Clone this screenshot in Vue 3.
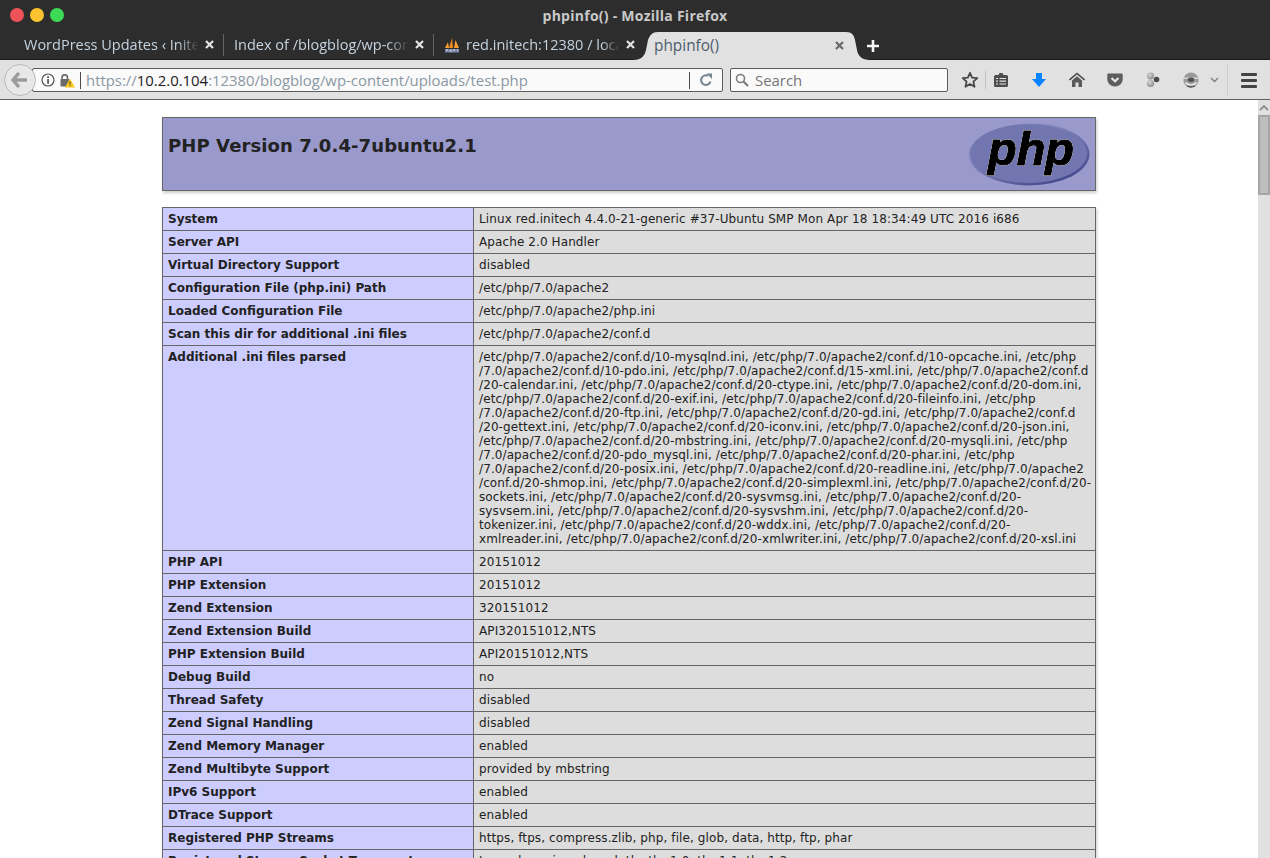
<template>
  <div class="window">
    <div class="titlebar">
      <div class="lights">
        <span class="light red"></span>
        <span class="light yellow"></span>
        <span class="light green"></span>
      </div>
      <div class="title">phpinfo() - Mozilla Firefox</div>
    </div>

    <div class="tabbar">
      <div v-for="tab in tabs" :key="tab.title" class="tab">
        <svg v-if="tab.pma" class="favicon" width="16" height="16" viewBox="0 0 16 16">
          <path d="M1 11 L4 5 L5 11Z" fill="#f7a030" />
          <path d="M5 11 L8 1 L9 11Z" fill="#f08a1d" />
          <path d="M10 11 L11.5 3 L15 11Z" fill="#f7a030" />
          <rect x="1" y="12" width="14" height="3.5" fill="#7c88a8" />
          <path d="M2 13h2M6 13h1v2M9 13h2M13 13h1" stroke="#d8dde8" stroke-width="1" fill="none" />
        </svg>
        <span class="tab-text">{{ tab.title }}</span>
        <svg class="close" width="9" height="9" viewBox="0 0 9 9">
          <path d="M1 1 L8 8 M8 1 L1 8" stroke="#e4e4e4" stroke-width="2.2" />
        </svg>
      </div>
      <div class="tab active">
        <svg class="tab-shape" width="237" height="28" viewBox="0 0 237 28">
          <path d="M0 28 C9 28 12 23 13 18 L15 8 C17 3 19 0 25 0 L213 0 C219 0 221 3 222 8 L224 18 C225 24 229 28 237 28Z" fill="#e1e1e1" />
        </svg>
        <span class="tab-text active-text">phpinfo()</span>
        <svg class="close" width="9" height="9" viewBox="0 0 9 9">
          <path d="M1 1 L8 8 M8 1 L1 8" stroke="#66686a" stroke-width="2.2" />
        </svg>
      </div>
      <svg class="plus" width="14" height="14" viewBox="0 0 14 14">
        <path d="M7 1 V13 M1 7 H13" stroke="#f4f4f4" stroke-width="2.6" />
      </svg>
    </div>

    <div class="navbar">
      <div class="back">
        <svg width="18" height="16" viewBox="0 0 18 16">
          <path d="M8 1 L2 8 L8 15 M2.5 8 H16" stroke="#9b9b9b" stroke-width="3.4" fill="none" />
        </svg>
      </div>
      <div class="urlbar">
        <svg class="info" width="14" height="14" viewBox="0 0 14 14">
          <circle cx="7" cy="7" r="6" fill="none" stroke="#555" stroke-width="1.2" />
          <rect x="6.2" y="6" width="1.7" height="4.8" fill="#555" />
          <rect x="6.2" y="3.2" width="1.7" height="1.7" fill="#555" />
        </svg>
        <svg class="lock" width="16" height="15" viewBox="0 0 16 15">
          <path d="M3 6 V4.5 C3 1 8.5 1 8.5 4.5 V6" fill="none" stroke="#6a6a6a" stroke-width="1.6" />
          <rect x="1.5" y="6" width="9" height="7.5" rx="1" fill="#6a6a6a" />
          <path d="M11 5.5 L16 14.5 H6Z" fill="#fdc91c" />
          <rect x="10.5" y="8.5" width="1" height="3" fill="#333" />
          <rect x="10.5" y="12.2" width="1" height="1" fill="#333" />
        </svg>
        <span class="url-sep"></span>
        <span class="url"><span class="dim">https://</span><span class="host">10.2.0.104</span><span class="dim">:12380/blogblog/wp-content/uploads/test.php</span></span>
        <span class="url-sep second"></span>
        <svg class="reload" width="14" height="14" viewBox="0 0 14 14">
          <path d="M11.5 8.5 A4.8 4.8 0 1 1 9 2.8" fill="none" stroke="#76848f" stroke-width="2" />
          <path d="M7.5 0.5 H13 V6 Z" fill="#76848f" />
        </svg>
      </div>
      <div class="searchbar">
        <svg width="14" height="14" viewBox="0 0 14 14">
          <circle cx="5.5" cy="5.5" r="4" fill="none" stroke="#7d7d7d" stroke-width="1.6" />
          <path d="M8.5 8.5 L13 13" stroke="#7d7d7d" stroke-width="2.2" />
        </svg>
        <span>Search</span>
      </div>

      <div class="tools">
        <div class="tool">
          <svg width="18" height="18" viewBox="0 0 18 18">
            <path d="M9 1.8 L11.1 6.6 L16.3 7.1 L12.4 10.6 L13.5 15.8 L9 13.1 L4.5 15.8 L5.6 10.6 L1.7 7.1 L6.9 6.6Z" fill="none" stroke="#484848" stroke-width="1.8" stroke-linejoin="round" />
          </svg>
        </div>
        <span class="tool-sep"></span>
        <div class="tool">
          <svg width="16" height="16" viewBox="0 0 16 16">
            <path d="M2.5 3 H5.5 L6.5 1 H9.5 L10.5 3 H13.5 Q15 3 15 4.5 V13.5 Q15 15 13.5 15 H2.5 Q1 15 1 13.5 V4.5 Q1 3 2.5 3Z" fill="#4d4d4d" />
            <path d="M3 6.5h2M6.5 6.5h6.5M3 9.2h2M6.5 9.2h6.5M3 12h2M6.5 12h6.5" stroke="#e1e1e1" stroke-width="1.2" />
          </svg>
        </div>
        <div class="tool gap">
          <svg width="16" height="16" viewBox="0 0 16 16">
            <path d="M5 1 H11 V7 H15 L8 15 L1 7 H5Z" fill="#0a84ff" />
          </svg>
        </div>
        <div class="tool gap">
          <svg width="16" height="16" viewBox="0 0 16 16">
            <path d="M0.5 8 L8 1.5 L15.5 8" fill="none" stroke="#4a4a4a" stroke-width="1.6" />
            <path d="M3 8.5 L8 4.2 L13 8.5 V15 H9.5 V10.5 H6.5 V15 H3Z" fill="#5a5a5a" />
          </svg>
        </div>
        <div class="tool gap">
          <svg width="16" height="16" viewBox="0 0 16 16">
            <path d="M1.5 1.5 H14.5 Q15.7 1.5 15.7 2.8 V7 C15.7 11.5 12 14.5 8 14.5 C4 14.5 0.3 11.5 0.3 7 V2.8 Q0.3 1.5 1.5 1.5Z" fill="#5d5d5d" />
            <path d="M4.5 6 L8 9.3 L11.5 6" fill="none" stroke="#e8e8e8" stroke-width="2.2" />
          </svg>
        </div>
        <div class="tool gap">
          <svg width="16" height="16" viewBox="0 0 16 16">
            <defs>
              <radialGradient id="ball" cx="0.4" cy="0.35" r="0.7">
                <stop offset="0" stop-color="#d8d8d8" />
                <stop offset="1" stop-color="#858585" />
              </radialGradient>
            </defs>
            <circle cx="5.5" cy="4" r="3.4" fill="url(#ball)" />
            <circle cx="5.5" cy="11.5" r="3.6" fill="url(#ball)" />
            <circle cx="11.5" cy="7.5" r="2.8" fill="#4b4b4b" />
          </svg>
        </div>
        <div class="tool gap">
          <svg width="16" height="16" viewBox="0 0 16 16">
            <circle cx="8" cy="8" r="7.6" fill="#9a9a9a" />
            <path d="M1 6.2 H15" stroke="#e2e2e2" stroke-width="1.2" />
            <ellipse cx="8" cy="7.8" rx="3.2" ry="2.2" fill="#4f4f4f" />
            <path d="M2.5 10.5 C5 13.6 11 13.6 13.5 10.5" fill="none" stroke="#f2f2f2" stroke-width="1.4" />
            <path d="M4 14 C6.5 15.3 9.5 15.3 12 14" fill="none" stroke="#4f4f4f" stroke-width="1.2" />
          </svg>
        </div>
        <div class="chevron">
          <svg width="9" height="6" viewBox="0 0 9 6">
            <path d="M1 1 L4.5 4.5 L8 1" fill="none" stroke="#7b7b7b" stroke-width="1.3" />
          </svg>
        </div>
        <span class="menu-sep"></span>
        <div class="hamburger">
          <span></span><span></span><span></span>
        </div>
      </div>
    </div>

    <div class="viewport">
      <div class="page">
        <table class="header-table">
          <tbody>
            <tr>
              <td class="h">
                <svg class="php-logo" width="122" height="64" viewBox="0 0 122 64">
                  <defs>
                    <linearGradient id="rim" x1="0.1" y1="0" x2="0.85" y2="1">
                      <stop offset="0" stop-color="#a6a9d4" />
                      <stop offset="0.5" stop-color="#7478b1" />
                      <stop offset="1" stop-color="#3d4288" />
                    </linearGradient>
                  </defs>
                  <ellipse cx="61" cy="32" rx="60.5" ry="31.5" fill="url(#rim)" />
                  <ellipse cx="60.5" cy="31.5" rx="58.5" ry="29.5" fill="#7276b0" />
                  <text class="php-word" x="20" y="43" textLength="86" lengthAdjust="spacingAndGlyphs">php</text>
                </svg>
                <h1>PHP Version 7.0.4-7ubuntu2.1</h1>
              </td>
            </tr>
          </tbody>
        </table>

        <table class="info-table">
          <colgroup>
            <col class="col-key" />
            <col />
          </colgroup>
          <tbody>
            <tr v-for="row in rows" :key="row.key">
              <td class="e">{{ row.key }}</td>
              <td class="v">
                <div v-for="line in row.lines" :key="line">{{ line }}</div>
              </td>
            </tr>
          </tbody>
        </table>
      </div>
      <div class="scrollbar">
        <div class="scroll-up">
          <svg width="10" height="6" viewBox="0 0 10 6">
            <path d="M1 5 L5 1 L9 5" fill="none" stroke="#8c8c8c" stroke-width="1.8" />
          </svg>
        </div>
        <div class="scroll-thumb"></div>
      </div>
    </div>
  </div>
</template>

<script setup>
const tabs = [
  { title: 'WordPress Updates ‹ Initech' },
  { title: 'Index of /blogblog/wp-content/uploads' },
  { title: 'red.initech:12380 / localhost', pma: true }
]

const conf = '/etc/php/7.0/apache2/conf.d'

const rows = [
  ['System', 'Linux red.initech 4.4.0-21-generic #37-Ubuntu SMP Mon Apr 18 18:34:49 UTC 2016 i686'],
  ['Server API', 'Apache 2.0 Handler'],
  ['Virtual Directory Support', 'disabled'],
  ['Configuration File (php.ini) Path', '/etc/php/7.0/apache2'],
  ['Loaded Configuration File', '/etc/php/7.0/apache2/php.ini'],
  ['Scan this dir for additional .ini files', conf],
  ['Additional .ini files parsed', [
    `${conf}/10-mysqlnd.ini, ${conf}/10-opcache.ini, /etc/php`,
    '/7.0/apache2/conf.d/10-pdo.ini, /etc/php/7.0/apache2/conf.d/15-xml.ini, /etc/php/7.0/apache2/conf.d',
    `/20-calendar.ini, ${conf}/20-ctype.ini, ${conf}/20-dom.ini,`,
    `${conf}/20-exif.ini, ${conf}/20-fileinfo.ini, /etc/php`,
    `/7.0/apache2/conf.d/20-ftp.ini, ${conf}/20-gd.ini, ${conf}`,
    `/20-gettext.ini, ${conf}/20-iconv.ini, ${conf}/20-json.ini,`,
    `${conf}/20-mbstring.ini, ${conf}/20-mysqli.ini, /etc/php`,
    `/7.0/apache2/conf.d/20-pdo_mysql.ini, ${conf}/20-phar.ini, /etc/php`,
    `/7.0/apache2/conf.d/20-posix.ini, ${conf}/20-readline.ini, /etc/php/7.0/apache2`,
    `/conf.d/20-shmop.ini, ${conf}/20-simplexml.ini, ${conf}/20-`,
    `sockets.ini, ${conf}/20-sysvmsg.ini, ${conf}/20-`,
    `sysvsem.ini, ${conf}/20-sysvshm.ini, ${conf}/20-`,
    `tokenizer.ini, ${conf}/20-wddx.ini, ${conf}/20-`,
    `xmlreader.ini, ${conf}/20-xmlwriter.ini, ${conf}/20-xsl.ini`
  ]],
  ['PHP API', '20151012'],
  ['PHP Extension', '20151012'],
  ['Zend Extension', '320151012'],
  ['Zend Extension Build', 'API320151012,NTS'],
  ['PHP Extension Build', 'API20151012,NTS'],
  ['Debug Build', 'no'],
  ['Thread Safety', 'disabled'],
  ['Zend Signal Handling', 'disabled'],
  ['Zend Memory Manager', 'enabled'],
  ['Zend Multibyte Support', 'provided by mbstring'],
  ['IPv6 Support', 'enabled'],
  ['DTrace Support', 'enabled'],
  ['Registered PHP Streams', 'https, ftps, compress.zlib, php, file, glob, data, http, ftp, phar'],
  ['Registered Stream Socket Transports', 'tcp, udp, unix, udg, ssl, tls, tlsv1.0, tlsv1.1, tlsv1.2']
].map(([key, value]) => ({ key, lines: Array.isArray(value) ? value : [value] }))
</script>

<style>
html,
body {
  margin: 0;
  overflow: hidden;
}
</style>

<style scoped>
.window {
  display: flex;
  flex-direction: column;
  height: 858px;
  overflow: hidden;
  font-family: "Open Sans", "Noto Sans", sans-serif;
}

.titlebar {
  display: flex;
  align-items: center;
  justify-content: center;
  position: relative;
  height: 30px;
  background: #2d2d2d;
}

.lights {
  position: absolute;
  left: 10px;
  top: 8px;
  display: flex;
  gap: 6px;
}

.light {
  width: 14px;
  height: 14px;
  border-radius: 50%;
}

.red { background: #f0525a; }
.yellow { background: #fdc22f; }
.green { background: #3ddb55; }

.title {
  color: #c9c9c9;
  font-size: 14px;
  font-weight: 700;
  letter-spacing: 0.25px;
}

.tabbar {
  display: flex;
  align-items: stretch;
  height: 30px;
  padding: 2px 0 0 14px;
  box-sizing: border-box;
  background: #2d2d2d;
  box-shadow: inset 0 -1px #1c1c1c;
}

.tab {
  display: flex;
  align-items: center;
  width: 210px;
  padding: 0 9px 1px 10px;
  box-sizing: border-box;
  border-right: 1px solid #63676a;
  margin-bottom: 4px;
  margin-top: 2px;
  height: 22px;
  align-self: center;
}

.tab-text {
  flex: 1;
  min-width: 0;
  overflow: hidden;
  white-space: nowrap;
  color: #c5d3df;
  font-size: 14.5px;
  -webkit-mask-image: linear-gradient(to right, #000 88%, transparent 100%);
  mask-image: linear-gradient(to right, #000 88%, transparent 100%);
}

.favicon {
  margin-right: 6px;
  flex-shrink: 0;
}

.close {
  margin-left: 6px;
  flex-shrink: 0;
}

.tab:nth-child(3) {
  border-right: none;
}

.tab.active {
  position: relative;
  width: 237px;
  height: 28px;
  margin: 0 0 0 -11px;
  padding: 0 26px 1px 21px;
  border: none;
  align-self: flex-end;
}

.tab-shape {
  position: absolute;
  left: 0;
  top: 0;
}

.active-text {
  position: relative;
  color: #4e5d6c;
  font-size: 15.4px;
  -webkit-mask-image: none;
  mask-image: none;
}

.tab.active .close {
  position: relative;
}

.plus {
  align-self: center;
  margin-left: -4px;
}

.navbar {
  display: flex;
  align-items: center;
  height: 40px;
  padding: 1px 6px 0 4px;
  box-sizing: border-box;
  background: #e1e1e1;
  border-bottom: 1px solid #5f5f5f;
}

.back {
  display: flex;
  align-items: center;
  justify-content: center;
  position: relative;
  z-index: 1;
  width: 32px;
  height: 32px;
  box-sizing: border-box;
  border: 1px solid #b9b9b9;
  border-radius: 50%;
  background: #e8e8e8;
  flex-shrink: 0;
}

.urlbar {
  display: flex;
  align-items: center;
  width: 691px;
  height: 24px;
  margin-left: -4px;
  padding: 0 9px 0 8px;
  box-sizing: border-box;
  background: #fafafa;
  border: 1px solid #5a5a5a;
  border-radius: 2px;
  flex-shrink: 0;
}

.info {
  flex-shrink: 0;
}

.lock {
  margin-left: 4px;
  flex-shrink: 0;
}

.url-sep {
  width: 1px;
  height: 17px;
  margin-left: 5px;
  background: #4c4c4c;
  flex-shrink: 0;
}

.url-sep.second {
  margin-left: 0;
  margin-right: 9px;
}

.url {
  flex: 1;
  min-width: 0;
  padding-left: 5px;
  white-space: nowrap;
  font-size: 14.9px;
}

.dim { color: #8b98a3; }
.host { color: #1c1c1c; }

.reload {
  flex-shrink: 0;
}

.searchbar {
  display: flex;
  align-items: center;
  gap: 6px;
  width: 218px;
  height: 24px;
  margin-left: 7px;
  padding-left: 4px;
  box-sizing: border-box;
  background: #fafafa;
  border: 1px solid #5a5a5a;
  border-radius: 2px;
  color: #757575;
  font-size: 14.9px;
  flex-shrink: 0;
}

.tools {
  display: flex;
  align-items: center;
  margin-left: 7px;
}

.tool {
  display: flex;
  align-items: center;
  justify-content: center;
  width: 30px;
  height: 24px;
  flex-shrink: 0;
}

.tool.gap {
  margin-left: 8px;
}

.tool-sep {
  width: 1px;
  height: 18px;
  background: #c2c2c2;
}

.chevron {
  display: flex;
  justify-content: center;
  width: 14px;
  margin-left: 1px;
}

.menu-sep {
  width: 1px;
  height: 34px;
  margin-left: 6px;
  background: #cfcfcf;
}

.hamburger {
  display: flex;
  flex-direction: column;
  gap: 3px;
  width: 16px;
  margin-left: 13px;
}

.hamburger span {
  height: 3px;
  border-radius: 1px;
  background: #444;
}

.viewport {
  display: flex;
  flex: 1;
  min-height: 0;
  background: #fff;
}

.page {
  flex: 1;
  min-width: 0;
  overflow: hidden;
  padding-top: 17px;
  font-family: "DejaVu Sans", sans-serif;
  color: #222;
}

table {
  border-collapse: collapse;
  width: 934px;
  margin: 0 0 0 162px;
  table-layout: fixed;
  box-shadow: 1px 2px 3px #ccc;
}

.header-table {
  margin-bottom: 16px;
}

.h {
  height: 64px;
  background: #99c;
  border: 1px solid #666;
  padding: 4px 5px;
  font-size: 12px;
  vertical-align: top;
  font-weight: bold;
}

.h h1 {
  margin: 13px 0 0;
  font-size: 18px;
  font-weight: bold;
  letter-spacing: 0.1px;
}

.php-logo {
  float: right;
}

.php-word {
  font-family: "Liberation Sans", sans-serif;
  font-size: 46px;
  font-style: italic;
  font-weight: 700;
  fill: #000;
  stroke: #000;
  stroke-width: 1.2px;
  filter: drop-shadow(0 0 0.6px #fff) drop-shadow(0 0 0.4px #fff);
}

.col-key {
  width: 311px;
}

td {
  border: 1px solid #666;
  font-size: 12px;
  padding: 4px 5px;
  vertical-align: baseline;
}

.e {
  background: #ccf;
  font-weight: bold;
  white-space: nowrap;
}

.v {
  background: #ddd;
  white-space: nowrap;
  overflow: hidden;
  letter-spacing: 0.1px;
}

.scrollbar {
  width: 12px;
  flex-shrink: 0;
  background: #e1e1e1;
}

.scroll-up {
  display: flex;
  align-items: center;
  justify-content: center;
  height: 15px;
}

.scroll-thumb {
  height: 80px;
  box-sizing: border-box;
  border: 2px solid #a6a6a6;
  background: #bdbdbd;
}
</style>
